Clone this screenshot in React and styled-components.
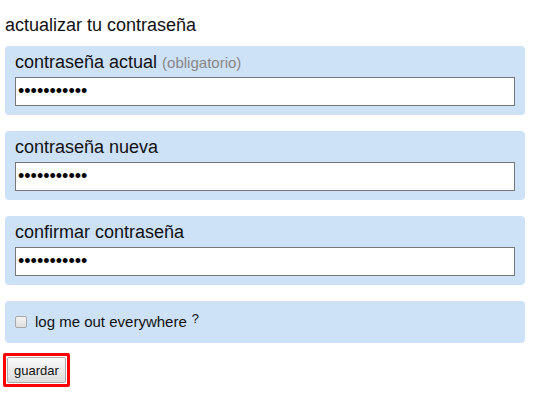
import React from "react";
import styled, { createGlobalStyle } from "styled-components";

const Global = createGlobalStyle`
  body {
    margin: 0;
    background: #fff;
    font-family: "Liberation Sans", Arial, sans-serif;
    color: #111;
  }
`;

const Page = styled.div`
  padding: 15px 5px 0 5px;
  width: 520px;
`;

const Title = styled.h2`
  margin: 0 0 10px 0;
  font-size: 18px;
  line-height: 21px;
  font-weight: normal;
`;

const Field = styled.div`
  background: #cde1f7;
  border-radius: 4px;
  padding: ${(props) => (props.check ? "13px 10px 14px 10px" : "4px 10px 9px 10px")};
  margin-bottom: ${(props) => (props.check ? "10px" : "16px")};
  display: flex;
  flex-direction: column;
`;

const Label = styled.label`
  font-size: 18px;
  line-height: 24px;
  height: 24px;
  margin-bottom: 3px;
`;

const Hint = styled.span`
  font-size: 15px;
  line-height: 1;
  color: #888;
`;

const Input = styled.input`
  box-sizing: border-box;
  width: 500px;
  height: 29px;
  margin: 0;
  border: 1px solid #777;
  padding: 0 2px;
  font-family: "Liberation Sans", Arial, sans-serif;
  font-size: 18px;
  background: #fff;
  outline: none;
`;

const CheckRow = styled.label`
  display: flex;
  align-items: center;
  font-size: 15px;
  line-height: 15px;
`;

const Box = styled.input`
  appearance: none;
  margin: 0 8px 0 0;
  width: 12px;
  height: 12px;
  border: 1px solid #a9a9a9;
  border-radius: 2px;
  background: linear-gradient(#f4f4f4, #dedede);
`;

const Help = styled.sup`
  font-size: 13px;
  margin-left: 5px;
  position: relative;
  top: -3px;
`;

const Highlight = styled.div`
  display: inline-block;
  margin-left: -2px;
  border: 3px solid #f00;
  border-radius: 2px;
  padding: 1px;
`;

const Button = styled.button`
  display: block;
  font-family: "Liberation Sans", Arial, sans-serif;
  font-size: 13px;
  height: 26px;
  padding: 0 6px;
  border: 1px solid #aaa;
  border-radius: 2px;
  color: #111;
  background: linear-gradient(#fafafa, #dcdcdc);
`;

const fields = [
  { label: "contraseña actual", hint: "(obligatorio)" },
  { label: "contraseña nueva" },
  { label: "confirmar contraseña" },
];

export default function App() {
  return (
    <Page>
      <Global />
      <Title>actualizar tu contraseña</Title>
      {fields.map((f) => (
        <Field key={f.label}>
          <Label>
            {f.label} {f.hint ? <Hint>{f.hint}</Hint> : null}
          </Label>
          <Input type="password" defaultValue="12345678901" />
        </Field>
      ))}
      <Field check>
        <CheckRow>
          <Box type="checkbox" />
          log me out everywhere
          <Help>?</Help>
        </CheckRow>
      </Field>
      <Highlight>
        <Button type="button">guardar</Button>
      </Highlight>
    </Page>
  );
}
